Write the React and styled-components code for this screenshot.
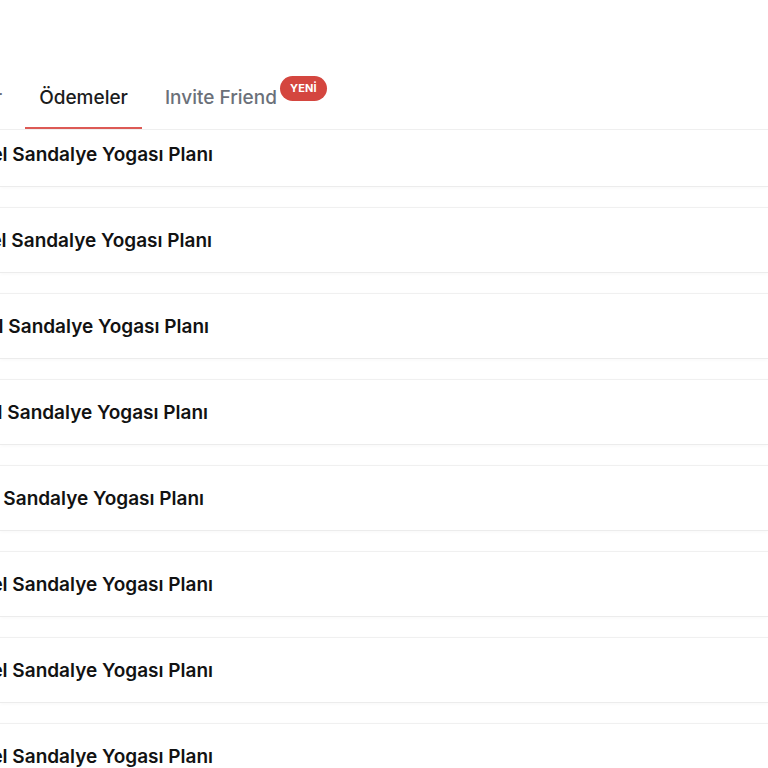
import React from "react";
import styled, { createGlobalStyle } from "styled-components";

const rows = [213, 212, 209, 208, 204, 213, 213, 213]; // where each title ends, px

const App = () => {
  return (
    <>
      <GlobalStyle />
      <Page>
        <TabBar>
          <Tab>Planlar</Tab>
          <Tab $active>Ödemeler</Tab>
          <Tab>
            Invite Friend
            <Badge>YENİ</Badge>
          </Tab>
        </TabBar>
        <List>
          {rows.map((end, i) => (
            <Card key={i}>
              <TitleBox $end={end}>
                <Title>Kişisel Sandalye Yogası Planı</Title>
              </TitleBox>
            </Card>
          ))}
        </List>
      </Page>
    </>
  );
};

const GlobalStyle = createGlobalStyle`
  html, body {
    margin: 0;
    background: #ffffff;
    overflow: hidden;
  }
  body {
    font-family: Inter, "Noto Sans", sans-serif;
    color: #141414;
  }
`;

const Page = styled.div`
  padding-top: 65px;
  width: 768px;
  overflow: hidden;
`;

const TabBar = styled.nav`
  position: relative;
  z-index: 1;
  display: flex;
  gap: 9px;
  height: 64px;
  margin-left: -74px;
  background: #ffffff;
  border-bottom: 1px solid #efefef;
`;

const Tab = styled.div`
  position: relative;
  display: flex;
  align-items: center;
  padding: 0 14px;
  font-size: 19px;
  font-weight: 500;
  white-space: nowrap;
  color: ${(p) => (p.$active ? "#1c1c1c" : "#6b7079")};
  box-shadow: ${(p) => (p.$active ? "inset 0 -2px 0 #dd5a55" : "none")};
`;

const Badge = styled.span`
  position: absolute;
  top: 11px;
  right: -36px;
  height: 25px;
  padding: 0 10px;
  border-radius: 13px;
  background: #d4463f;
  color: #ffffff;
  font-size: 11px;
  font-weight: 700;
  line-height: 25px;
  letter-spacing: 0.2px;
`;

const List = styled.div`
  display: flex;
  flex-direction: column;
  gap: 20px;
  margin-top: -9px;
`;

const Card = styled.div`
  display: flex;
  align-items: center;
  height: 64px;
  border-top: 1px solid #f0f0f0;
  border-bottom: 1px solid #ececec;
  box-shadow: 0 1px 4px rgba(0, 0, 0, 0.03);
  background: #ffffff;
`;

const TitleBox = styled.div`
  display: flex;
  justify-content: flex-end;
  width: ${(p) => p.$end}px;
`;

const Title = styled.span`
  font-size: 19px;
  font-weight: 600;
  white-space: nowrap;
  color: #121212;
`;

export default App;
